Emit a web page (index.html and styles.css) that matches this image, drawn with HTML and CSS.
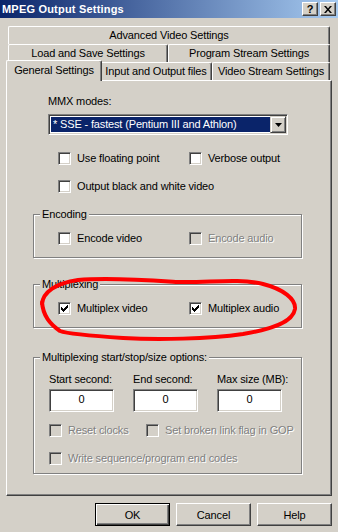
FILE: index.html
```html
<!DOCTYPE html>
<html lang="en">
<head>
<meta charset="UTF-8" />
<title>MPEG Output Settings</title>
<link rel="stylesheet" href="styles.css">
</head>
<body>

<div class="window">
  <div class="titlebar">
    <span class="title">MPEG Output Settings</span>
    <div class="caption-btns">
      <span class="cap-btn">?</span>
      <span class="cap-btn"><svg width="8" height="7" viewBox="0 0 8 7"><path d="M0 0h2l2 2.4L6 0h2L5 3.5 8 7H6L4 4.6 2 7H0l3-3.5z"/></svg></span>
    </div>
  </div>

  <div class="tabs">
    <div class="tab-row">
      <div class="tab tab-full">Advanced Video Settings</div>
    </div>
    <div class="tab-row">
      <div class="tab tab-load">Load and Save Settings</div>
      <div class="tab tab-fill">Program Stream Settings</div>
    </div>
    <div class="tab-row">
      <div class="tab tab-general active">General Settings</div>
      <div class="tab tab-io">Input and Output files</div>
      <div class="tab tab-fill">Video Stream Settings</div>
    </div>
  </div>

  <div class="panel">
    <div class="mmx-label">MMX modes:</div>
    <div class="combo">
      <div class="combo-value">* SSE - fastest (Pentium III and Athlon)</div>
      <div class="combo-btn"><svg width="7" height="4" viewBox="0 0 7 4"><path d="M0 0h7L3.5 4z"/></svg></div>
    </div>

    <div class="checks top-checks">
      <div class="check"><span class="cb"></span>Use floating point</div>
      <div class="check"><span class="cb"></span>Verbose output</div>
      <div class="check full"><span class="cb"></span>Output black and white video</div>
    </div>

    <div class="group group-encoding">
      <div class="legend">Encoding</div>
      <div class="checks">
        <div class="check"><span class="cb"></span>Encode video</div>
        <div class="check disabled"><span class="cb"></span>Encode audio</div>
      </div>
    </div>

    <div class="group group-mux">
      <div class="legend">Multiplexing</div>
      <div class="checks">
        <div class="check"><span class="cb checked"><svg width="7" height="7" viewBox="0 0 7 7"><path d="M0 2h1v1h1v1h1V3h1V2h1V1h1V0h1v3H6v1H5v1H4v1H3v1H2V6H1V5H0z"/></svg></span>Multiplex video</div>
        <div class="check"><span class="cb checked"><svg width="7" height="7" viewBox="0 0 7 7"><path d="M0 2h1v1h1v1h1V3h1V2h1V1h1V0h1v3H6v1H5v1H4v1H3v1H2V6H1V5H0z"/></svg></span>Multiplex audio</div>
      </div>
    </div>

    <div class="group group-limits">
      <div class="legend">Multiplexing start/stop/size options:</div>
      <div class="fields">
        <div>Start second:</div>
        <div>End second:</div>
        <div>Max size (MB):</div>
        <div class="edit">0</div>
        <div class="edit">0</div>
        <div class="edit">0</div>
      </div>
      <div class="checks">
        <div class="check disabled"><span class="cb"></span>Reset clocks</div>
        <div class="check disabled"><span class="cb"></span>Set broken link flag in GOP</div>
        <div class="check disabled full"><span class="cb"></span>Write sequence/program end codes</div>
      </div>
    </div>
  </div>

  <div class="buttons">
    <div class="btn default">OK</div>
    <div class="btn">Cancel</div>
    <div class="btn">Help</div>
  </div>

  <!-- red marker drawn over the multiplexing box -->
  <svg class="marker" width="262" height="68" viewBox="0 0 262 68">
    <path d="M4 30C5 18 18 9 40 6C70 3 110 6 140 8C170 9 200 4 225 10C245 15 258 25 257 35C255 48 235 55 205 60C170 65 120 66 85 64C55 62 30 60 22 57C12 50 5 42 4 28" fill="none" stroke="#ff0000" stroke-width="4" stroke-linecap="round"/>
  </svg>
</div>

</body>
</html>
```

FILE: styles.css
```css
* {
  box-sizing: border-box;
}
body {
  margin: 0;
  background-color: #d4d0c8;
  font-family: "Liberation Sans", Arial, sans-serif;
  font-size: 11px;
  letter-spacing: -0.15px;
  color: #000;
}
.window {
  position: relative;
  width: 338px;
  height: 532px;
  overflow: hidden;
}

/* title bar */
.titlebar {
  height: 18px;
  display: flex;
  align-items: center;
  justify-content: space-between;
  padding: 0 2px;
  background: linear-gradient(to right, #0a246a, #a6caf0);
}
.title {
  color: #fff;
  font-weight: bold;
  letter-spacing: 0.2px;
}
.caption-btns {
  display: flex;
  gap: 2px;
}
.cap-btn {
  width: 16px;
  height: 14px;
  display: flex;
  align-items: center;
  justify-content: center;
  background-color: #d4d0c8;
  border: 1px solid;
  border-color: #fff #404040 #404040 #fff;
  box-shadow: inset -1px -1px 0 #808080;
  font-weight: bold;
  line-height: 1;
}

/* tabs */
.tabs {
  padding: 8px 8px 0 8px;
}
.tab-row {
  display: flex;
  height: 18px;
}
.tab {
  height: 18px;
  line-height: 17px;
  text-align: center;
  white-space: nowrap;
  background-color: #d4d0c8;
  border: 1px solid;
  border-bottom: 0;
  border-color: #fff #404040 #fff #fff;
  border-radius: 2px 2px 0 0;
  box-shadow: inset -1px 0 0 #808080;
}
.tab-full, .tab-fill {
  flex: 1;
}
.tab-load {
  width: 160px;
}
.tab-general {
  width: 92px;
}
.tab-io {
  width: 112px;
}
.tab.active {
  position: relative;
  z-index: 1;
  width: 96px;
  height: 21px;
  margin: -2px -2px 0 -2px;
  line-height: 18px;
}

/* page */
.panel {
  height: 416px;
  margin: 0 6px;
  padding: 14px 0 0 26px;
  border: 1px solid;
  border-color: #fff #404040 #404040 #fff;
  box-shadow: inset -1px -1px 0 #808080;
}
.mmx-label {
  margin-left: 15px;
  line-height: 13px;
}
.combo {
  display: flex;
  width: 240px;
  height: 21px;
  margin: 6px 0 0 15px;
  padding: 1px;
  background-color: #fff;
  border: 1px solid;
  border-color: #808080 #fff #fff #808080;
  box-shadow: inset 1px 1px 0 #404040, inset -1px -1px 0 #d4d0c8;
}
.combo-value {
  flex: 1;
  margin: 1px 0 1px 1px;
  padding-left: 2px;
  background-color: #0a246a;
  color: #fff;
  line-height: 15px;
}
.combo-btn {
  width: 16px;
  display: flex;
  align-items: center;
  justify-content: center;
  background-color: #d4d0c8;
  border: 1px solid;
  border-color: #d4d0c8 #404040 #404040 #d4d0c8;
  box-shadow: inset 1px 1px 0 #fff, inset -1px -1px 0 #808080;
}

/* check boxes */
.checks {
  display: grid;
  grid-template-columns: 131px auto;
  row-gap: 15px;
  margin: 11px 0 0 24px;
}
.top-checks {
  margin: 17px 0 0 25px;
}
.check {
  display: flex;
  align-items: center;
  gap: 6px;
  height: 13px;
  line-height: 13px;
  white-space: nowrap;
}
.check.full {
  grid-column: 1 / -1;
}
.cb {
  width: 13px;
  height: 13px;
  display: flex;
  align-items: center;
  justify-content: center;
  background-color: #fff;
  border: 1px solid;
  border-color: #808080 #fff #fff #808080;
  box-shadow: inset 1px 1px 0 #404040, inset -1px -1px 0 #d4d0c8;
}
.check.disabled {
  color: #808080;
  text-shadow: 1px 1px 0 #fff;
}
.check.disabled .cb {
  background-color: #d4d0c8;
}

/* group boxes */
.group {
  width: 269px;
  margin-top: 21px;
  padding-bottom: 12px;
  border: 1px solid #808080;
  box-shadow: inset 1px 1px 0 #fff, 1px 1px 0 #fff;
}
.group-mux {
  margin-top: 26px;
}
.group-limits {
  margin-top: 29px;
  padding-bottom: 8px;
}
.legend {
  display: table;
  margin: -7px 0 0 6px;
  padding: 0 2px;
  line-height: 13px;
  background-color: #d4d0c8;
}
.fields {
  display: grid;
  grid-template-columns: repeat(3, 65px);
  column-gap: 19px;
  row-gap: 3px;
  margin: 9px 0 0 15px;
  line-height: 13px;
  white-space: nowrap;
}
.edit {
  height: 23px;
  line-height: 19px;
  text-align: center;
  background-color: #fff;
  border: 1px solid;
  border-color: #808080 #fff #fff #808080;
  box-shadow: inset 1px 1px 0 #404040, inset -1px -1px 0 #d4d0c8;
}
.group-limits .checks {
  grid-template-columns: 97px auto;
  margin: 12px 0 0 15px;
}

/* dialog buttons */
.buttons {
  display: flex;
  justify-content: flex-end;
  gap: 6px;
  padding: 7px 6px 0 0;
}
.btn {
  width: 75px;
  height: 23px;
  display: flex;
  align-items: center;
  justify-content: center;
  border: 1px solid;
  border-color: #fff #404040 #404040 #fff;
  box-shadow: inset -1px -1px 0 #808080;
}
.btn.default {
  border-color: #000;
  box-shadow: inset 1px 1px 0 #fff, inset -1px -1px 0 #404040, inset -2px -2px 0 #808080;
}

.marker {
  position: absolute;
  left: 38px;
  top: 274px;
  pointer-events: none;
}
```
